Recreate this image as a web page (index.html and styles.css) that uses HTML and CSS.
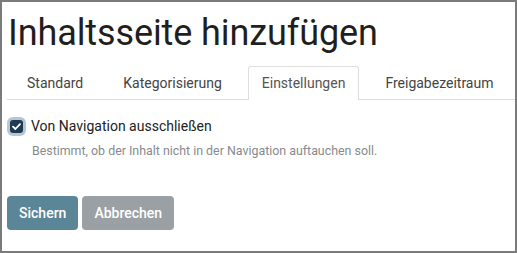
FILE: index.html
```html
<!DOCTYPE html>
<html lang="de">
<head>
    <meta charset="UTF-8">
    <title>Inhaltsseite hinzufügen</title>
    <link rel="stylesheet" href="styles.css">
</head>
<body>
    <div class="frame">
        <h1>Inhaltsseite hinzufügen</h1>

        <!-- Tabs -->
        <ul class="tabs">
            <li><a href="#">Standard</a></li>
            <li><a href="#">Kategorisierung</a></li>
            <li class="active"><a href="#">Einstellungen</a></li>
            <li><a href="#">Freigabezeitraum</a></li>
        </ul>

        <div class="field">
            <label class="check">
                <span class="box">
                    <svg width="9" height="7" viewBox="0 0 9 7"><path d="M1 3.6 L3.4 6 L8 1.2" fill="none" stroke="#fff" stroke-width="1.8" stroke-linecap="round" stroke-linejoin="round"/></svg>
                </span>
                Von Navigation ausschließen
            </label>
            <p class="help">Bestimmt, ob der Inhalt nicht in der Navigation auftauchen soll.</p>
        </div>

        <div class="actions">
            <button class="btn primary">Sichern</button>
            <button class="btn secondary">Abbrechen</button>
        </div>
    </div>
</body>
</html>
```

FILE: styles.css
```css
/* Reset */
body {
    margin: 0;
    padding: 0;
    font-family: Roboto, 'Liberation Sans', sans-serif;
    background-color: #fff;
}

/* Rahmen um den ganzen Dialog */
.frame {
    width: 517px;
    height: 253px;
    box-sizing: border-box;
    border: 2px solid #7b7b7b;
    padding: 0 0 0 5px;
}

h1 {
    margin: 0;
    padding: 9px 0 0 1px;
    font-size: 36px;
    font-weight: 400;
    line-height: 45px;
    color: #1f1f1f;
    letter-spacing: -0.1px;
}

/* Tabs */
.tabs {
    list-style: none;
    margin: 10px 0 0 0;
    padding: 0 0 0 6px;
    display: flex;
    gap: 12px;
    border-bottom: 1px solid #dedede;
}

.tabs li {
    margin-bottom: -1px;
}

.tabs a {
    display: block;
    padding: 0 13px;
    height: 33px;
    line-height: 33px;
    font-size: 14px;
    color: #444;
    text-decoration: none;
    border: 1px solid transparent;
    border-bottom: none;
    border-radius: 3px 3px 0 0;
    box-sizing: border-box;
}

.tabs li.active a {
    border-color: #dedede;
    background-color: #fff;
    height: 34px;
    color: #555;
}

/* Checkbox */
.field {
    padding: 18px 0 0 0;
}

.check {
    display: flex;
    align-items: center;
    gap: 5px;
    font-size: 14px;
    color: #222;
}

.box {
    width: 13px;
    height: 13px;
    border-radius: 3px;
    background-color: #1d3b53;
    box-shadow: 0 0 0 3px #b9c6d2;
    margin-left: 3px;
    margin-right: 3px;
    display: flex;
    align-items: center;
    justify-content: center;
}

.help {
    margin: 9px 0 0 25px;
    font-size: 12.4px;
    color: #868b90;
}

/* Buttons */
.actions {
    margin-top: 38px;
    display: flex;
    gap: 4px;
}

.btn {
    height: 34px;
    padding: 0 12px;
    border: none;
    border-radius: 4px;
    font-family: Roboto, 'Liberation Sans', sans-serif;
    font-size: 14px;
    font-weight: 500;
    color: #fff;
}

.btn.primary {
    background-color: #5b8698;
}

.btn.secondary {
    background-color: #9ba0a5;
}
```
